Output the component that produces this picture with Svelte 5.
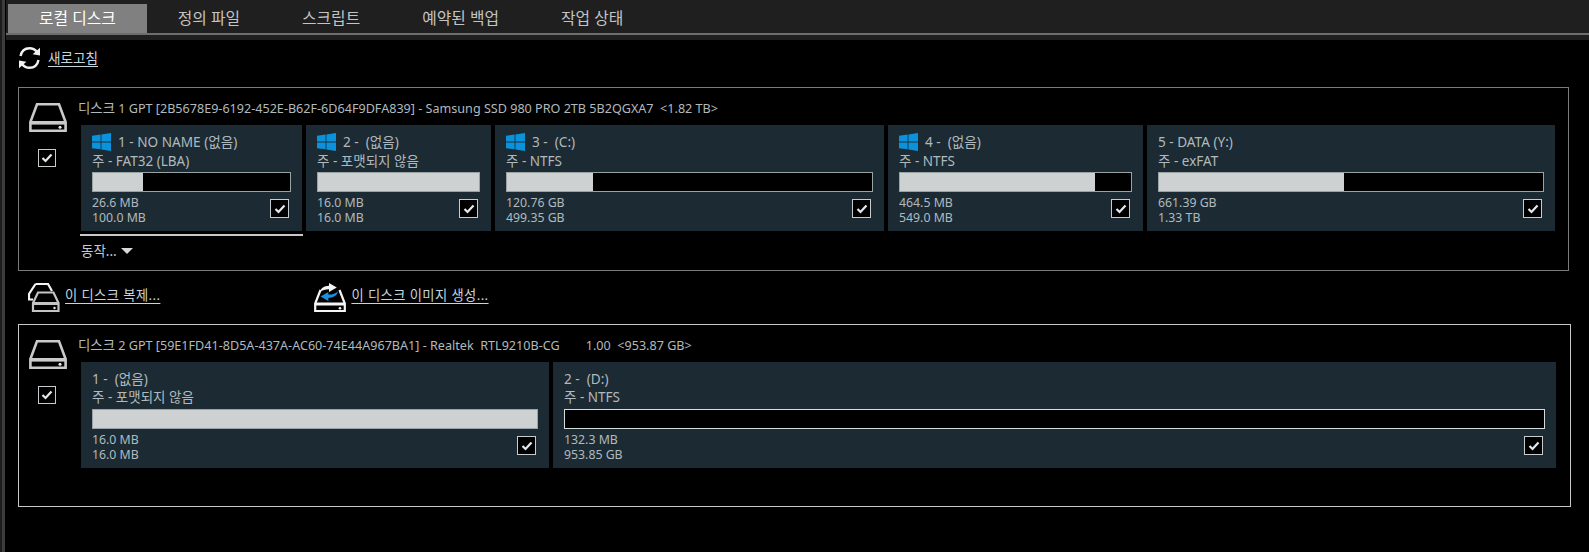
<script>
	const tabs = ['로컬 디스크', '정의 파일', '스크립트', '예약된 백업', '작업 상태'];

	const disks = [
		{
			label: '1 GPT [2B5678E9-6192-452E-B62F-6D64F9DFA839] - Samsung SSD 980 PRO 2TB 5B2QGXA7  <1.82 TB>',
			selected: false,
			parts: [
				{ w: 221, win: true, name: '1 - NO NAME (없음)', type: '주 - FAT32 (LBA)', used: 25.6, a: '26.6 MB', b: '100.0 MB', underline: true },
				{ w: 185, win: true, name: '2 -  (없음)', type: '주 - 포맷되지 않음', used: 100, a: '16.0 MB', b: '16.0 MB' },
				{ w: 389, win: true, name: '3 -  (C:)', type: '주 - NTFS', used: 23.5, a: '120.76 GB', b: '499.35 GB' },
				{ w: 255, win: true, name: '4 -  (없음)', type: '주 - NTFS', used: 84.3, a: '464.5 MB', b: '549.0 MB' },
				{ w: 408, win: false, name: '5 - DATA (Y:)', type: '주 - exFAT', used: 48.2, a: '661.39 GB', b: '1.33 TB' }
			]
		},
		{
			label: '2 GPT [59E1FD41-8D5A-437A-AC60-74E44A967BA1] - Realtek  RTL9210B-CG        1.00  <953.87 GB>',
			selected: true,
			parts: [
				{ w: 468, win: false, name: '1 -  (없음)', type: '주 - 포맷되지 않음', used: 100, a: '16.0 MB', b: '16.0 MB' },
				{ w: 1003, win: false, name: '2 -  (D:)', type: '주 - NTFS', used: 0, a: '132.3 MB', b: '953.85 GB' }
			]
		}
	];
</script>

{#snippet check()}
	<span class="check">
		<svg viewBox="0 0 12 10" width="12" height="10">
			<path d="M1.5 5 L4.5 8 L10.5 1.5" fill="none" stroke="#e4eaf0" stroke-width="2.2" />
		</svg>
	</span>
{/snippet}

{#snippet drive()}
	<svg class="drive" viewBox="0 0 38 29" width="38" height="29">
		<path d="M8 1.3 H30 L36.6 19 V27.7 H1.4 V19 Z" fill="none" stroke="#cacaca" stroke-width="2.6" />
		<rect x="1" y="18" width="36" height="3.6" fill="#cacaca" />
		<circle cx="31" cy="24.3" r="1.5" fill="#e8e8e8" />
	</svg>
{/snippet}

{#snippet windows()}
	<svg class="win" viewBox="0 0 19 18" width="19" height="18">
		<path d="M0 2.8 L8.6 1.5 V8.6 H0 Z M9.4 1.4 L19 0 V8.6 H9.4 Z M0 9.4 H8.6 V16.3 L0 15.2 Z M9.4 9.4 H19 V18 L9.4 16.5 Z" fill="#0a93dc" />
	</svg>
{/snippet}

<div class="page">
	<div class="rail"></div>
	<div class="main">
		<div class="tabs">
			<div class="tabbar">
				{#each tabs as tab, i}
					<div class="tab" class:active={i === 0}>{tab}</div>
				{/each}
			</div>
		</div>

		<div class="refresh">
			<svg viewBox="0 0 23 24" width="23" height="24">
				<path d="M2.5 10 C3.5 5 7 2.2 11.5 2.2 C14.5 2.2 17 3.4 18.8 5.8" fill="none" stroke="#f2f2f2" stroke-width="2.4" />
				<path d="M22 1.8 L22 9.6 L14.6 8.2 Z" fill="#f2f2f2" />
				<path d="M20.5 14 C19.5 19 16 21.8 11.5 21.8 C8.5 21.8 6 20.6 4.2 18.2" fill="none" stroke="#f2f2f2" stroke-width="2.4" />
				<path d="M1 22.2 L1 14.4 L8.4 15.8 Z" fill="#f2f2f2" />
			</svg>
			<a href="#refresh" class="link">새로고침</a>
		</div>

		{#each disks as disk, d}
			<section class="disk" class:selected={disk.selected}>
				<div class="side">
					{@render drive()}
					{@render check()}
				</div>
				<div class="content">
					<div class="heading"><span class="word">디스크</span> {disk.label}</div>
					<div class="parts">
						{#each disk.parts as p}
							<div class="part-wrap" style="width: {p.w}px">
								<div class="part" class:has-icon={d === 0}>
									<div class="name">
										{#if p.win}{@render windows()}{/if}
										<span>{p.name}</span>
									</div>
									<div class="type">{p.type}</div>
									<div class="bar" class:empty={p.used === 0}>
										<div class="fill" style="width: {p.used}%"></div>
									</div>
									<div class="bottom">
										<div class="sizes">
											<div>{p.a}</div>
											<div>{p.b}</div>
										</div>
										{@render check()}
									</div>
								</div>
								{#if p.underline}
									<div class="under"></div>
									<div class="actions">동작... <span class="tri"></span></div>
								{/if}
							</div>
						{/each}
					</div>
				</div>
			</section>

			{#if d === 0}
				<div class="tools">
					<div class="tool first">
						<svg viewBox="0 0 32 29" width="32" height="29">
							<path d="M7.5 1 H20 L24 8 M7.5 1 L1 11 V16.5 H5" fill="none" stroke="#f4f4f4" stroke-width="2.2" />
							<path d="M10 9.5 H25.5 L30.5 20 V28 H5 V20 Z" fill="#000" stroke="#c4c4c4" stroke-width="2.2" />
							<rect x="4.5" y="19" width="26.5" height="3" fill="#c4c4c4" />
							<circle cx="26.5" cy="25" r="1.2" fill="#e8e8e8" />
						</svg>
						<a href="#clone" class="link">이 디스크 복제...</a>
					</div>
					<div class="tool">
						<svg viewBox="0 0 32 29" width="32" height="29">
							<path d="M6.5 7 L1.2 20.5 V28 H30.8 V20.5 L25.5 7" fill="none" stroke="#f5f5f5" stroke-width="2.2" />
							<rect x="1" y="19.5" width="30" height="3" fill="#f5f5f5" />
							<circle cx="26" cy="25.2" r="1.3" fill="#f5f5f5" />
							<g transform="translate(15 0) scale(1.3 1) translate(-15 0)">
								<path d="M8 9 C9 5 11 3 15 2.8 V0 L21 4.5 L15 9 V6.2 C12 6.2 10 7 8 9 Z" fill="#f5f5f5" />
								<path d="M22 8.5 C21 13 18 14.8 14.5 15 V18 L8.5 13.5 L14.5 9 V11.6 C18 11.6 20 10.5 22 8.5 Z" fill="#1a8fe0" />
							</g>
						</svg>
						<a href="#image" class="link">이 디스크 이미지 생성...</a>
					</div>
				</div>
			{/if}
		{/each}
	</div>
</div>

<style>
	:global(body) {
		background: #000;
		overflow: hidden;
	}

	.page {
		display: flex;
		height: 552px;
		background: #000;
		color: #b0babe;
		font-family: 'Noto Sans', 'Noto Sans CJK KR', sans-serif;
		font-size: 12.3px;
	}

	.rail {
		flex: none;
		width: 2px;
		margin-right: 1px;
		background: #1c1c1c;
		border-right: 3px solid #3c3c3c;
	}

	.main {
		flex: 1;
		min-width: 0;
	}

	.tabs {
		padding-bottom: 5px;
		background: #1f1f1f;
	}

	.tabbar {
		display: flex;
		height: 29px;
		padding: 4px 0 0 2px;
		border-bottom: 2px solid #6e6e6e;
	}

	.tab {
		padding: 0 31px;
		line-height: 29px;
		font-size: 15.8px;
		color: #c4c4c4;
		white-space: nowrap;
	}

	.tab.active {
		background: #808080;
		color: #fff;
	}

	.refresh {
		display: flex;
		align-items: flex-start;
		gap: 7px;
		height: 47px;
		box-sizing: border-box;
		padding: 6px 0 0 12px;
	}

	.refresh .link {
		margin-top: 3px;
		font-size: 13.6px;
	}

	.link {
		color: #c5d5de;
		font-size: 13.3px;
		line-height: 18px;
		text-decoration: underline;
		text-underline-offset: 3px;
		white-space: nowrap;
	}

	.disk {
		display: flex;
		width: 1551px;
		height: 184px;
		margin-left: 12px;
		padding-top: 12px;
		box-sizing: border-box;
		border: 1px solid #7a7a7a;
	}

	.disk.selected {
		width: 1553px;
		height: 183px;
		border-color: #c8c8c8;
	}

	.side {
		flex: none;
		width: 62px;
		display: flex;
		flex-direction: column;
		align-items: flex-start;
		padding-top: 3px;
		gap: 17px;
	}

	.drive {
		margin-left: 10px;
	}

	.side .check {
		width: 18px;
		height: 18px;
		margin: 0 0 0 19px;
	}

	.heading {
		height: 16px;
		margin-bottom: 9px;
		margin-left: -3px;
		line-height: 16px;
		font-size: 12.6px;
		white-space: pre;
	}

	.word {
		font-size: 13.4px;
	}

	.parts {
		display: flex;
		gap: 4px;
	}

	.part-wrap {
		flex: none;
		height: 106px;
	}

	.part {
		height: 106px;
		box-sizing: border-box;
		padding: 7px 11px 0;
		background: #1c2a33;
	}

	.name {
		display: flex;
		align-items: center;
		gap: 7px;
		height: 20px;
		line-height: 20px;
		font-size: 13.6px;
		white-space: pre;
	}

	.win {
		flex: none;
		margin-top: -1px;
	}

	.type {
		height: 20px;
		box-sizing: border-box;
		line-height: 16px;
		font-size: 13.5px;
		white-space: pre;
	}

	.part.has-icon .type {
		padding-top: 1px;
	}

	.bar {
		height: 20px;
		box-sizing: border-box;
		background: #000;
		border: 1px solid #98a4a4;
	}

	.bar.empty {
		border-color: #d5dcdc;
	}

	.fill {
		height: 100%;
		background: #cdd1d1;
	}

	.bottom {
		display: flex;
		justify-content: space-between;
		margin-top: 4px;
	}

	.sizes {
		margin-top: -1px;
		line-height: 15px;
	}

	.check {
		display: flex;
		align-items: center;
		justify-content: center;
		flex: none;
		width: 19px;
		height: 19px;
		margin: 3px 2px 0 0;
		box-sizing: border-box;
		background: #000;
		border: 1px solid #c6cccc;
	}

	.under {
		height: 2px;
		margin: 3px -1px 0;
		background: #c8c8c8;
	}

	.actions {
		display: flex;
		align-items: center;
		height: 20px;
		margin-top: 5px;
		line-height: 20px;
		font-size: 13.5px;
		color: #c4cace;
		white-space: pre;
	}

	.tri {
		width: 0;
		height: 0;
		margin-left: 1px;
		border: 6px solid transparent;
		border-top: 6px solid #d8d8d8;
		border-bottom: 0;
	}

	.tools {
		display: flex;
		align-items: center;
		height: 53px;
		padding-left: 22px;
	}

	.tool {
		display: flex;
		align-items: center;
		gap: 5px;
	}

	.tool.first {
		margin-right: 154px;
	}

	.tool .link {
		margin-bottom: 6px;
		letter-spacing: 0.4px;
	}
</style>
